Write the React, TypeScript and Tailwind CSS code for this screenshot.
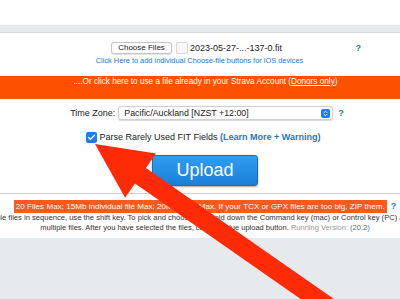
import { Check, ChevronsUpDown } from 'lucide-react'

// ─── Red annotation arrow (drawn over the page) ──────────────────────────────

function RedArrow() {
  return (
    <svg
      className="pointer-events-none absolute left-0 top-0"
      width={400}
      height={299}
      viewBox="0 0 400 299"
    >
      <polygon
        points="95,144 155.9,153.6 146,167.9 362.9,319.2 352,334.8 135,183.5 125.1,197.8"
        fill="#ff2b06"
      />
    </svg>
  )
}

// ─── Page ─────────────────────────────────────────────────────────────────────

export default function App() {
  return (
    <div className="relative w-[400px] h-[299px] overflow-hidden bg-[#e6eaed] font-['Liberation_Sans',Arial,sans-serif] text-[#222]">
      <div className="h-[25px] bg-white" />
      <div className="h-[8px] bg-[#e6eaed] border-b border-[#d3d7da]" />

      <div className="bg-white">
        {/* File picker */}
        <div className="h-[43px] pt-[9px]">
          <div className="flex items-center h-[12px] pl-[111px] pr-[39px]">
            <button className="h-[12px] w-[61px] rounded-[3px] border border-[#c4c4c4] bg-white text-[8px] leading-[10px] text-[#222] shadow-[0_0.5px_1px_rgba(0,0,0,0.12)]">
              Choose Files
            </button>
            <span className="ml-[4px] h-[12px] w-[12px] rounded-[2px] border border-[#d8d8d8] bg-[#f7f7f7]" />
            <span className="ml-[2px] text-[9px] leading-[12px]">2023-05-27-...-137-0.fit</span>
            <span className="flex-1" />
            <span className="text-[9px] font-bold leading-[12px] text-[#1a78d6]">?</span>
          </div>
          <div className="mt-[2px] text-center text-[7.4px] leading-[10px] text-[#1a78d6] pr-[1px]">
            Click Here to add individual Choose-file buttons for iOS devices
          </div>
        </div>

        {/* Strava bar */}
        <div className="h-[23px] bg-[#fc5200] pt-[1px] pl-[11px] text-center text-[8.2px] leading-[10px] text-white">
          ....Or click here to use a file already in your Strava Account (<span className="underline">Donors only</span>)
        </div>

        {/* Options */}
        <div className="pt-[7px] pb-[7px]">
          <div className="flex items-center justify-center h-[14px] pl-[14px]">
            <span className="text-[9px] leading-[14px]">Time Zone:</span>
            <div className="ml-[3px] flex h-[14px] w-[215px] items-center rounded-[3px] border border-[#d0d0d0] bg-white pl-[5px] pr-[2px] shadow-[0_0.5px_1px_rgba(0,0,0,0.15)]">
              <span className="flex-1 text-[8.8px] leading-[12px]">Pacific/Auckland [NZST +12:00]</span>
              <span className="flex h-[9px] w-[9px] items-center justify-center rounded-[2px] bg-[#1f7cf0] text-white">
                <ChevronsUpDown size={7} strokeWidth={3} />
              </span>
            </div>
            <span className="ml-[5px] text-[9px] font-bold leading-[14px] text-[#1a78d6]">?</span>
          </div>

          <div className="mt-[11px] flex items-center justify-center h-[12px] pl-[6px]">
            <span className="flex h-[11px] w-[11px] items-center justify-center rounded-[2px] bg-[#1f7cf0] text-white">
              <Check size={9} strokeWidth={3.5} />
            </span>
            <span className="ml-[3px] text-[9px] leading-[12px]">
              Parse Rarely Used FIT Fields{' '}
              <span className="font-bold text-[#1a78d6]">(Learn More + Warning)</span>
            </span>
          </div>

          <div className="mt-[12px] flex justify-center pl-[10px]">
            <button className="h-[31px] w-[106px] rounded-[3px] border border-[#1a6dbd] bg-gradient-to-b from-[#2f9df2] to-[#1b7fd8] text-[18px] leading-[29px] text-white shadow-[0_1px_2px_rgba(0,0,0,0.35)]">
              Upload
            </button>
          </div>
        </div>

        <div className="h-px bg-[#c9cdd0]" />

        {/* Limits + help */}
        <div className="pt-[6px] pb-[5px] text-center">
          <div className="flex items-center justify-center h-[13px] pl-[10px]">
            <span className="bg-[#fc5a1a] px-[2px] text-[8.1px] leading-[13px] text-white">
              20 Files Max; 15Mb individual file Max; 20Mb Total Max. If your TCX or GPX files are too big, ZIP them.
            </span>
            <span className="ml-[4px] text-[9px] font-bold leading-[13px] text-[#1a78d6]">?</span>
          </div>
          <div className="overflow-hidden whitespace-nowrap text-left text-[7.6px] leading-[10px] text-[#333]">
            <span className="ml-[-52px]">
              To select multiple files in sequence, use the shift key. To pick and choose files hold down the Command key (mac) or Control key (PC) and click
            </span>
          </div>
          <div className="pl-[10px] text-[7.5px] leading-[10px] text-[#333]">
            multiple files. After you have selected the files, click the blue upload button.{' '}
            <span className="text-[#9a9a9a]">Running Version:</span>{' '}
            <span className="text-[#1a78d6]">(20.2)</span>
          </div>
        </div>
      </div>

      <RedArrow />
    </div>
  )
}
